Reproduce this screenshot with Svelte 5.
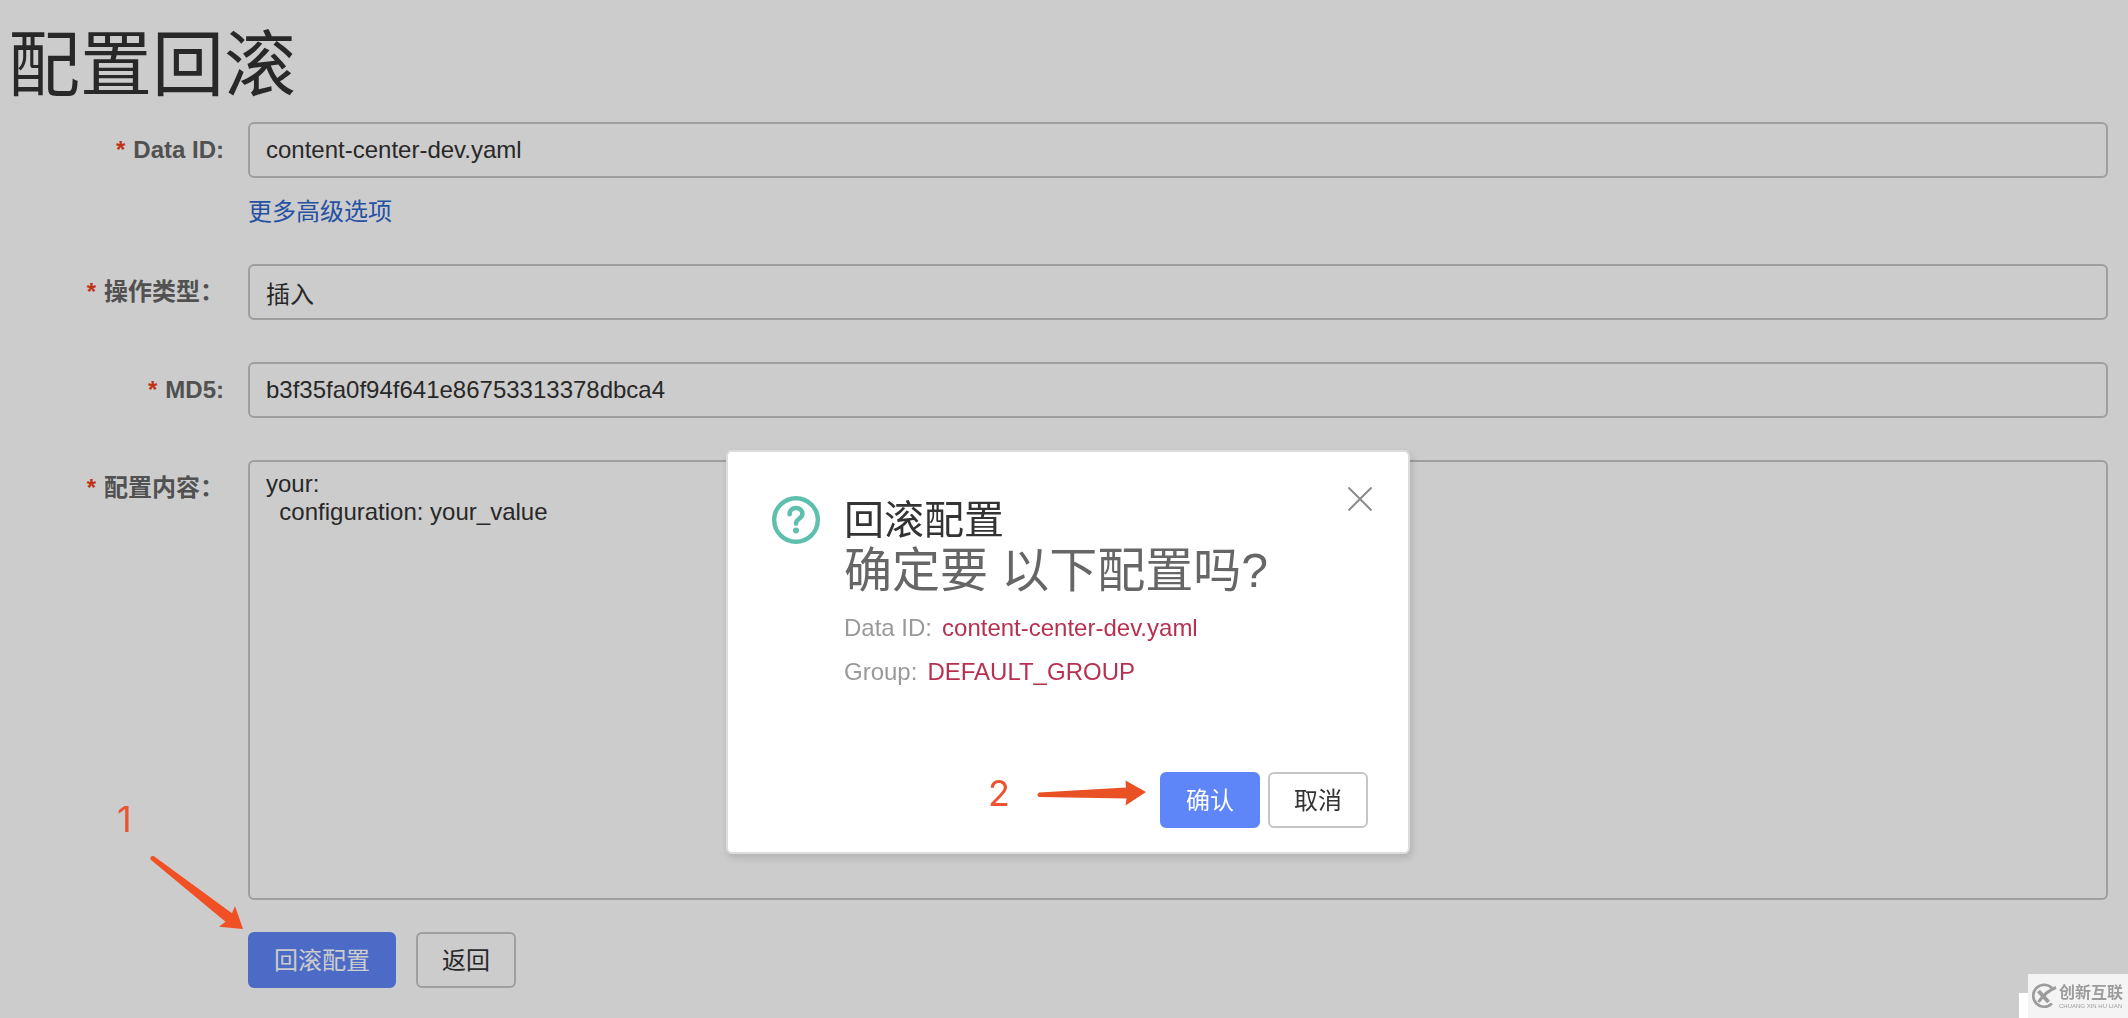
<script lang="ts">
  let dataId = $state("content-center-dev.yaml");
  let group = $state("DEFAULT_GROUP");
  let opType = $state("插入");
  let md5 = $state("b3f35fa0f94f641e86753313378dbca4");
  let content = $state("your:\n  configuration: your_value");
  let confirming = $state(true);
</script>

<main class="page">
  <h1>配置回滚</h1>

  <form onsubmit={(e) => e.preventDefault()}>
    <div class="row with-link">
      <label for="dataId"><span class="star">*</span>Data ID:</label>
      <div class="control">
        <input id="dataId" type="text" readonly value={dataId} />
        <a class="more" href="#more">更多高级选项</a>
      </div>
    </div>

    <div class="row">
      <label for="opType"><span class="star">*</span>操作类型：</label>
      <div class="control">
        <input id="opType" type="text" readonly value={opType} />
      </div>
    </div>

    <div class="row">
      <label for="md5"><span class="star">*</span>MD5:</label>
      <div class="control">
        <input id="md5" type="text" readonly value={md5} />
      </div>
    </div>

    <div class="row last">
      <label for="content"><span class="star">*</span>配置内容：</label>
      <div class="control">
        <textarea id="content" readonly value={content}></textarea>
      </div>
    </div>

    <div class="actions">
      <button class="btn primary" type="button" onclick={() => (confirming = true)}>回滚配置</button>
      <button class="btn" type="button">返回</button>
    </div>
  </form>
</main>

{#if confirming}
  <div class="overlay">
    <div class="dialog" role="dialog" aria-modal="true" aria-labelledby="dialog-title">
      <button class="close" type="button" aria-label="关闭" onclick={() => (confirming = false)}>
        <svg viewBox="0 0 24 24" width="24" height="24" fill="none" stroke="#8c8c8c" stroke-width="2">
          <path d="M0.5 0.5L23.5 23.5M23.5 0.5L0.5 23.5" />
        </svg>
      </button>
      <div class="body">
        <svg class="icon" viewBox="0 0 48 48" width="48" height="48" fill="none" stroke="#5fbfad">
          <circle cx="24" cy="24" r="21.8" stroke-width="4.4" />
          <path d="M17.6 18.2C17.6 14.4 20.3 12 24 12S30.4 14.4 30.4 18C30.4 22.4 24 22.6 24 27.6" stroke-width="4.6" stroke-linecap="round" />
          <circle cx="24" cy="34.4" r="3" fill="#5fbfad" stroke="none" />
        </svg>
        <div class="text">
          <h2 id="dialog-title">回滚配置</h2>
          <h3>确定要 以下配置吗?</h3>
          <p><span>Data ID:</span><span class="value">{dataId}</span></p>
          <p><span>Group:</span><span class="value">{group}</span></p>
        </div>
      </div>
      <div class="footer">
        <button class="btn primary" type="button" onclick={() => (confirming = false)}>确认</button>
        <button class="btn" type="button" onclick={() => (confirming = false)}>取消</button>
      </div>
    </div>
  </div>
{/if}

<!-- step markers -->
<div class="step one">
  <span>1</span>
  <svg viewBox="0 0 94 75" width="94" height="75" fill="#f15025">
    <path d="M0.5 4.5Q0 0.5 4 1.2L82 58.3L85 51L93 74L69 71.8L75.5 66.8Z" />
  </svg>
</div>
<div class="step two">
  <span>2</span>
  <svg viewBox="0 0 110 26" width="110" height="26" fill="#e95023">
    <path d="M3 12.5L90 7.5L89.5 0.5L110 12L89.5 25.5L90.5 18.5L3 17Q0 14.8 3 12.5Z" />
  </svg>
</div>

<div class="watermark">
  <svg viewBox="0 0 26 26" width="26" height="26" fill="none" stroke="#9c9c9c">
    <path d="M21 5A11 11 0 1 0 21 20.5" stroke-width="2.6" />
    <path d="M7.5 8L17.5 19" stroke-width="4" />
    <path d="M25 4.5C18 7 13 11 7.5 19" stroke-width="3" />
  </svg>
  <div class="brand">
    <strong>创新互联</strong>
    <small>CHUANG XIN HU LIAN</small>
  </div>
</div>

<style>
  :global(body) {
    margin: 0;
    background: #fff;
    font-family: "Liberation Sans", "Noto Sans CJK SC", sans-serif;
    font-size: 24px;
    color: #333;
  }
  .page {
    padding: 0 20px 30px 0;
  }
  h1 {
    margin: 0;
    padding: 8px 0 0 8px;
    font-size: 72px;
    line-height: 114px;
    font-weight: 400;
  }
  .row {
    display: flex;
    margin-bottom: 42px;
  }
  .row.with-link {
    margin-bottom: 40px;
  }
  .row.last {
    margin-bottom: 32px;
  }
  label {
    width: 224px;
    margin-right: 24px;
    flex-shrink: 0;
    line-height: 56px;
    text-align: right;
    font-weight: 700;
    color: #666;
  }
  .star {
    margin-right: 8px;
    color: #f0401c;
  }
  .control {
    flex: 1;
  }
  input,
  textarea {
    display: block;
    box-sizing: border-box;
    width: 100%;
    border: 2px solid #c6c6c8;
    border-radius: 6px;
    background: #fff;
    color: #333;
    font-family: inherit;
    font-size: 24px;
    outline: none;
  }
  input {
    height: 56px;
    padding: 0 16px;
  }
  textarea {
    height: 440px;
    padding: 8px 16px;
    line-height: 28px;
    resize: none;
  }
  .more {
    display: block;
    width: max-content;
    margin-top: 22px;
    line-height: 24px;
    color: #2f66cc;
    text-decoration: none;
  }
  .actions {
    display: flex;
    gap: 20px;
    margin-left: 248px;
  }
  .btn {
    box-sizing: border-box;
    height: 56px;
    padding: 0 24px 4px;
    border: 2px solid #c6c6c8;
    border-radius: 6px;
    background: #fff;
    color: #333;
    font-family: inherit;
    font-size: 24px;
    cursor: pointer;
  }
  .btn.primary {
    border-color: #5f86f9;
    background: #5f86f9;
    color: #fff;
  }
  .overlay {
    position: fixed;
    inset: 0;
    display: flex;
    align-items: flex-start;
    justify-content: center;
    padding: 450px 0 0 8px;
    background: rgba(0, 0, 0, 0.2);
  }
  .dialog {
    position: relative;
    box-sizing: border-box;
    width: 684px;
    padding: 44px 40px 24px 44px;
    border: 2px solid #dcdcdf;
    border-radius: 6px;
    background: #fff;
    box-shadow: 2px 4px 8px rgba(0, 0, 0, 0.14);
  }
  .close {
    position: absolute;
    top: 35px;
    right: 36px;
    display: flex;
    padding: 0;
    border: 0;
    background: none;
    cursor: pointer;
  }
  .body {
    display: flex;
    gap: 24px;
    min-height: 276px;
  }
  .icon {
    flex-shrink: 0;
  }
  .text {
    padding-top: 2px;
  }
  h2,
  h3 {
    margin: 0;
    font-weight: 400;
  }
  h2 {
    font-size: 40px;
    line-height: 44px;
  }
  h3 {
    margin-bottom: 6px;
    font-size: 48px;
    line-height: 58px;
    color: #666;
  }
  p {
    display: flex;
    gap: 10px;
    margin: 0;
    line-height: 44px;
    color: #999;
  }
  .value {
    color: #b8304f;
  }
  .footer {
    display: flex;
    justify-content: flex-end;
    gap: 8px;
  }
  .step {
    position: absolute;
    display: flex;
    font-family: Inter, sans-serif;
    font-size: 36px;
    line-height: 36px;
    font-weight: 400;
    color: #ea5430;
    pointer-events: none;
  }
  .one {
    left: 117px;
    top: 801px;
    flex-direction: column;
    gap: 18px;
  }
  .one svg {
    margin-left: 33px;
  }
  .two {
    left: 988px;
    top: 775px;
    align-items: center;
    gap: 26px;
  }
  .watermark {
    position: fixed;
    right: 0;
    bottom: 0;
    display: flex;
    align-items: center;
    gap: 2px;
    box-sizing: border-box;
    width: 100px;
    height: 44px;
    padding-left: 3px;
    background: #f4f4f4;
    color: #9c9c9c;
    box-shadow: -9px 19px 0 #fff;
  }
  .brand {
    display: flex;
    flex-direction: column;
  }
  strong {
    font-size: 16px;
    line-height: 20px;
  }
  small {
    font-size: 6px;
    line-height: 6px;
    white-space: nowrap;
  }
</style>
